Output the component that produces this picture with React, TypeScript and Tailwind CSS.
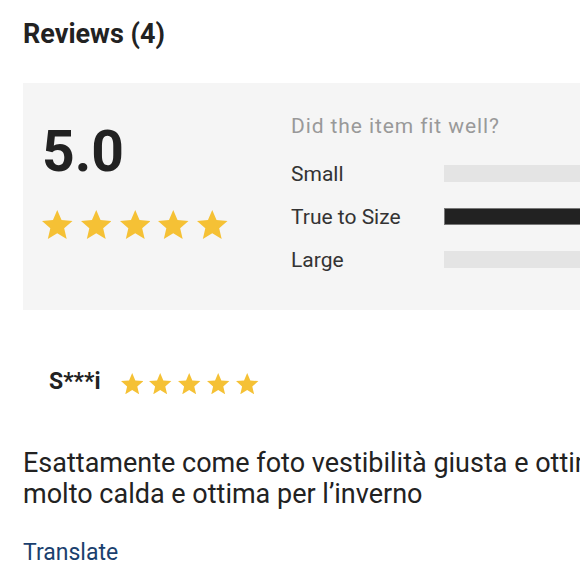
// Reviews summary block
const STAR =
  '12 17.27 18.18 21 16.54 13.97 22 9.24 14.81 8.62 12 2 9.19 8.62 2 9.24 7.46 13.97 5.82 21';

type StarsProps = {
  size: string;
  gap: string;
};

function Stars({ size, gap }: StarsProps) {
  return (
    <div className={`flex ${gap}`}>
      {[0, 1, 2, 3, 4].map((i) => (
        <svg key={i} viewBox="2 2 20 19" className={size}>
          <polygon points={STAR} fill="#f5c135" />
        </svg>
      ))}
    </div>
  );
}

// Fit rows: label + bar
const fitRows = [
  { label: 'Small', active: false },
  { label: 'True to Size', active: true },
  { label: 'Large', active: false },
];

function App() {
  return (
    <div className="h-[579px] w-[580px] overflow-hidden bg-white font-['Roboto',sans-serif] text-[#222]">
      <div className="w-[820px] px-[23px]">
        <h2 className="mt-[18px] text-[27px] font-bold leading-[32px]">
          Reviews (4)
        </h2>

        {/* Summary panel */}
        <div className="mt-[33px] flex h-[227px] bg-[#f5f5f5] pl-[19px]">
          <div className="w-[249px] pt-[40px]">
            <p className="text-[57px] font-bold leading-none">5.0</p>
            <div className="mt-[30px]">
              <Stars size="h-[29px] w-[30.5px]" gap="gap-[8.25px]" />
            </div>
          </div>

          <div className="flex-1 pt-[31px]">
            <p className="text-[21px] leading-[24px] tracking-[0.9px] text-[#999]">
              Did the item fit well?
            </p>
            <div className="mt-[14px]">
              {fitRows.map((row) => (
                <div key={row.label} className="flex h-[43px] items-center">
                  <span className="w-[153px] text-[21px] leading-[24px] text-[#333]">
                    {row.label}
                  </span>
                  <div
                    className={`h-[17px] flex-1 ${row.active ? 'border border-[#777] bg-[#222]' : 'bg-[#e4e4e4]'}`}
                  />
                </div>
              ))}
            </div>
          </div>
        </div>

        {/* Single review */}
        <div className="mt-[59px] flex items-start pl-[26px]">
          <span className="text-[23px] font-bold leading-[26px]">S***i</span>
          <div className="ml-[20px] mt-[4px]">
            <Stars size="h-[21.3px] w-[22.4px]" gap="gap-[6.5px]" />
          </div>
        </div>

        <p className="mt-[53px] whitespace-nowrap text-[27px] leading-[31px] text-[#222]">
          Esattamente come foto vestibilità giusta e ottima qualità, la felpa è
          <br />
          molto calda e ottima per l’inverno
        </p>

        <p className="mt-[29px] text-[23px] leading-[27px] text-[#1a3f6e]">
          Translate
        </p>
      </div>
    </div>
  );
}

export default App;
